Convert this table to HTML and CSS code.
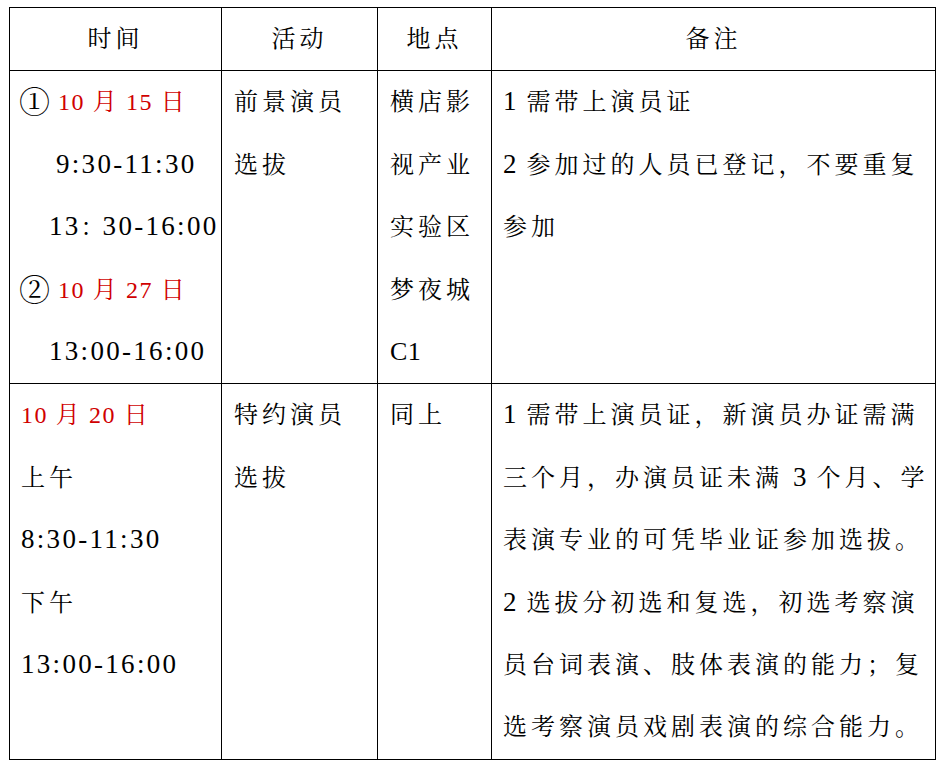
FILE: index.html
```html
<!DOCTYPE html>
<html lang="zh-CN">
<head>
<meta charset="utf-8">
<title>演员选拔</title>
<link rel="stylesheet" href="styles.css">
</head>
<body>
<div class="page">
  <table class="sched">
    <colgroup>
      <col class="c-time">
      <col class="c-act">
      <col class="c-place">
      <col class="c-note">
    </colgroup>
    <thead>
      <tr>
        <th>时间</th>
        <th>活动</th>
        <th>地点</th>
        <th>备注</th>
      </tr>
    </thead>
    <tbody>
      <tr>
        <td class="time">
          <span class="circ">①</span><span class="date">10 月 15 日</span><br>
          <span class="num ind1">9:30-11:30</span><br>
          <span class="num ind2">13<span class="fw">：</span>30-16:00</span><br>
          <span class="circ">②</span><span class="date">10 月 27 日</span><br>
          <span class="num ind2">13:00-16:00</span>
        </td>
        <td>前景演员<br>选拔</td>
        <td>横店影<br>视产业<br>实验区<br>梦夜城<br><span class="lat">C1</span></td>
        <td class="note"><span class="d">1</span> 需带上演员证<br><span class="d">2</span> 参加过的人员已登记，不要重复<br>参加</td>
      </tr>
      <tr>
        <td class="time">
          <span class="date">10 月 20 日</span><br>
          上午<br>
          <span class="num">8:30-11:30</span><br>
          下午<br>
          <span class="num">13:00-16:00</span>
        </td>
        <td>特约演员<br>选拔</td>
        <td>同上</td>
        <td class="note"><span class="d">1</span> 需带上演员证，新演员办证需满<br>三个月，办演员证未满 <span class="d">3</span> 个月、学<br>表演专业的可凭毕业证参加选拔。<br><span class="d">2</span> 选拔分初选和复选，初选考察演<br>员台词表演、肢体表演的能力；复<br>选考察演员戏剧表演的综合能力。</td>
      </tr>
    </tbody>
  </table>
</div>
</body>
</html>
```

FILE: styles.css
```css
html, body {
  margin: 0;
  padding: 0;
  background: #ffffff;
}

.page {
  padding: 7px 0 0 9px;
}

.sched {
  border-collapse: collapse;
  table-layout: fixed;
  width: 926px;
  font-family: "Liberation Serif", "Noto Serif CJK SC", "Noto Sans CJK SC", serif;
  font-size: 24px;
  color: #000;
  letter-spacing: 4px;
}

.c-time { width: 212px; }
.c-act { width: 156px; }
.c-place { width: 114px; }
.c-note { width: 444px; }

.sched th,
.sched td {
  border: 1.4px solid #000;
  line-height: 62.4px;
  padding: 0 0 0 12px;
  vertical-align: top;
  white-space: nowrap;
  overflow: hidden;
}

.sched th {
  font-weight: normal;
  text-align: center;
  padding: 0;
}

.sched td.time {
  padding-left: 11px;
}

.sched td.note {
  padding-left: 11px;
}

.date {
  color: #d00000;
  letter-spacing: 1.6px;
}

.num {
  font-size: 27px;
  letter-spacing: 2.3px;
  line-height: 1;
}

.d {
  font-size: 27px;
  letter-spacing: 0;
  line-height: 1;
}

.fw {
  font-size: 24px;
  letter-spacing: -2px;
}

.lat {
  font-size: 26px;
  letter-spacing: 0.5px;
  line-height: 1;
}

.circ {
  display: inline-block;
  font-size: 31px;
  letter-spacing: 0;
  width: 39px;
  margin-left: -2px;
  line-height: 1;
  vertical-align: -3px;
}

.ind1 {
  padding-left: 35px;
}

.ind2 {
  padding-left: 28px;
}
```
